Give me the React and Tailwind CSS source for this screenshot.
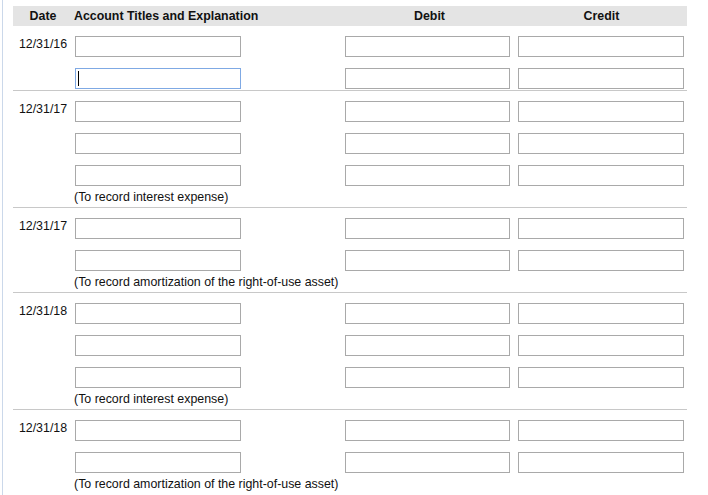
import React from 'react';

const groups = [
  { date: '12/31/16', rows: 2, note: null, focusRow: 1 },
  { date: '12/31/17', rows: 3, note: '(To record interest expense)' },
  { date: '12/31/17', rows: 2, note: '(To record amortization of the right-of-use asset)' },
  { date: '12/31/18', rows: 3, note: '(To record interest expense)' },
  { date: '12/31/18', rows: 2, note: '(To record amortization of the right-of-use asset)' },
];

const Field = ({ w, focused }) => (
  <div className="relative">
    <input
      type="text"
      readOnly
      className={`block h-[21px] ${w} bg-white outline-none border ${
        focused ? 'border-[#7fa9e4]' : 'border-[#a9a9a9]'
      }`}
    />
    {/* fake caret */}
    {focused && <span className="absolute left-[3px] top-[3px] w-px h-[15px] bg-black" />}
  </div>
);

const EntryRow = ({ date, focused }) => (
  <div className="grid grid-cols-[60px_270px_173px_171px] h-[21px]">
    <div className="text-center leading-[16px]">{date}</div>
    <div className="pl-[2px]">
      <Field w="w-[166px]" focused={focused} />
    </div>
    <div className="pl-[2px]">
      <Field w="w-[165px]" />
    </div>
    <div className="pl-[2px]">
      <Field w="w-[166px]" />
    </div>
  </div>
);

const Group = ({ date, rows, note, focusRow, last }) => (
  <div className={`pt-[10px] ${last ? '' : 'border-b border-[#c8c8c8]'}`}>
    <div className="flex flex-col gap-[11px]">
      {Array.from({ length: rows }).map((_, i) => (
        <EntryRow key={i} date={i === 0 ? date : ''} focused={focusRow === i} />
      ))}
    </div>
    {note ? (
      <div className="h-[21px] pl-[61px] pt-[3px] leading-[16px]">{note}</div>
    ) : (
      <div className="h-px" />
    )}
  </div>
);

export default function App() {
  return (
    <div className="w-[708px] h-[495px] overflow-hidden bg-white pl-[2px] flex text-[12.4px] text-[#111] font-['Liberation_Sans',Arial,sans-serif]">
      <div className="flex-1 border-l border-[#cbd8ea] pl-[10px] pt-[6px]">
        <div className="w-[674px]">
          {/* Header */}
          <div className="grid grid-cols-[60px_270px_173px_171px] h-[20px] bg-[#e4e4e4] items-center font-bold">
            <div className="text-center">Date</div>
            <div className="pl-[1px]">Account Titles and Explanation</div>
            <div className="text-center">Debit</div>
            <div className="text-center">Credit</div>
          </div>

          {groups.map((g, i) => (
            <Group key={i} {...g} last={i === groups.length - 1} />
          ))}
        </div>
      </div>
    </div>
  );
}
